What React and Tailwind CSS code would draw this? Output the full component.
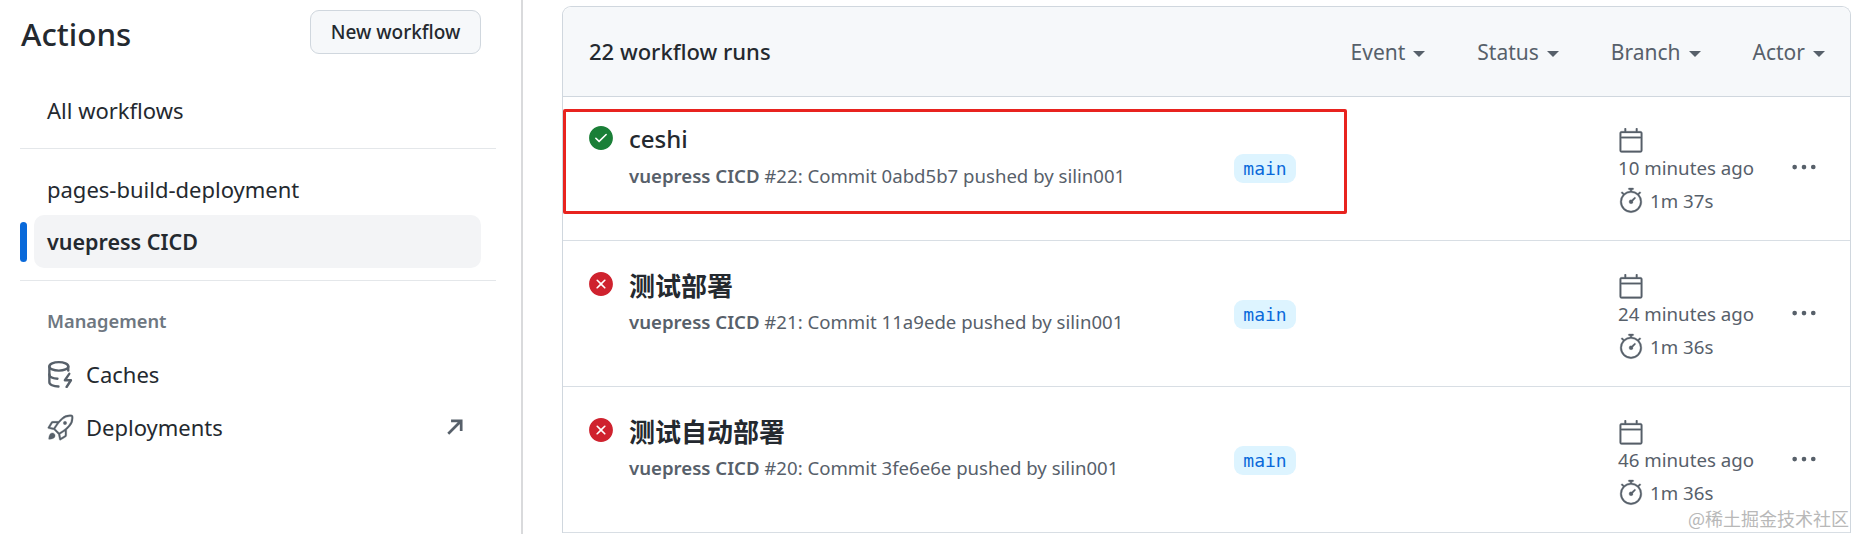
import { GoCheckCircleFill, GoXCircleFill, GoCalendar, GoStopwatch, GoKebabHorizontal, GoRocket } from 'react-icons/go'

const runs = [
  { title: 'ceshi', ok: true, sub: '#22: Commit 0abd5b7 pushed by silin001', when: '10 minutes ago', took: '1m 37s', box: 'h-[144px] pt-[28px]', head: 'text-[24px] leading-[34px] font-medium' },
  { title: '测试部署', ok: false, sub: '#21: Commit 11a9ede pushed by silin001', when: '24 minutes ago', took: '1m 36s', box: 'h-[146px] pt-[30px]', head: 'text-[26px] leading-[36px] font-bold' },
  { title: '测试自动部署', ok: false, sub: '#20: Commit 3fe6e6e pushed by silin001', when: '46 minutes ago', took: '1m 36s', box: 'h-[146px] pt-[30px]', head: 'text-[26px] leading-[36px] font-bold' },
]

const filters = ['Event', 'Status', 'Branch', 'Actor']

// react-icons has no octicon "cache", so this one is drawn by hand
function CacheIcon() {
  return (
    <svg viewBox="0 0 16 16" className="h-[27px] w-[27px] text-[#57606a]" fill="none" stroke="currentColor" strokeWidth="1.4" strokeLinecap="round">
      <ellipse cx="7" cy="3.2" rx="5.6" ry="2.5" />
      <path d="M1.4 3.2v9.4c0 1.4 2.4 2.5 5.4 2.5" />
      <path d="M1.4 8c0 1.3 2 2.3 4.8 2.5" />
      <path d="M12.6 3.2v2.4" />
      <path d="M13.2 7.6 10.6 11.4h3.6L11.6 15.4" strokeLinejoin="round" />
    </svg>
  )
}

function Sidebar() {
  return (
    <aside className="w-[523px] shrink-0 border-r-2 border-[#d9dadc] pl-[20px] text-[#24292f]">
      <div className="w-[476px]">
        <div className="flex items-start justify-between pt-[10px] pr-[15px]">
          <h1 className="ml-[1px] h-[44px] text-[31.3px] font-medium leading-[48px]">Actions</h1>
          <button className="h-[44px] w-[171px] rounded-[9px] border border-[#d0d7de] bg-[#f6f8fa] text-[19px] font-medium leading-[42px]">
            New workflow
          </button>
        </div>
        <div className="mt-[30px] flex h-[53px] items-center pl-[27px] text-[22px]">All workflows</div>
        <div className="mt-[11px] border-t border-[#e4e7ea]" />
        <div className="mt-[16px] flex h-[50px] items-center pb-[1px] pl-[27px] text-[22px]">pages-build-deployment</div>
        <div className="flex h-[53px] items-center">
          <span className="h-[40px] w-[7px] rounded-[4px] bg-[#0969da]" />
          <div className="ml-[7px] flex h-[53px] w-[447px] items-center rounded-[10px] bg-[#f3f4f6] pl-[13px] pt-[1px] text-[21.5px] font-semibold">
            vuepress CICD
          </div>
        </div>
        <div className="mt-[12px] border-t border-[#e4e7ea]" />
        <div className="mt-[28px] h-[24px] pl-[27px] text-[18.3px] font-semibold leading-[24px] text-[#6e7781]">Management</div>
        <div className="mt-[15px] flex h-[53px] items-center pl-[27px] text-[22px]">
          <CacheIcon />
          <span className="ml-[12px]">Caches</span>
        </div>
        <div className="flex h-[52px] items-center pl-[27px] text-[22px]">
          <GoRocket className="h-[27px] w-[27px] text-[#57606a]" stroke="currentColor" strokeWidth={0.3} />
          <span className="ml-[12px]">Deployments</span>
          <svg viewBox="0 0 16 16" className="ml-auto mr-[32px] h-[18px] w-[18px] text-[#57606a]" fill="none" stroke="currentColor" strokeWidth="2.4">
            <path d="M2 14 13.5 2.5M4.5 2.5h9v9" />
          </svg>
        </div>
      </div>
    </aside>
  )
}

function Run({ run }) {
  return (
    <div className={`flex items-start border-b border-[#d8dee4] pl-[25px] ${run.box}`}>
      {run.ok ? (
        <GoCheckCircleFill className="h-[26px] w-[26px] shrink-0 text-[#1a7f37]" />
      ) : (
        <GoXCircleFill className="h-[26px] w-[26px] shrink-0 text-[#cf222e]" />
      )}
      <div className="-mt-[3px] ml-[15px] w-[605px] shrink-0">
        <div className={`h-[34px] text-[#24292f] ${run.head}`}>{run.title}</div>
        <div className="mt-[7px] h-[26px] text-[18.6px] leading-[26px] text-[#57606a]">
          <span className="font-semibold">vuepress CICD</span> {run.sub}
        </div>
      </div>
      <div className="mt-[29px] h-[29px] w-[62px] shrink-0 rounded-[9px] bg-[#ddf4ff] text-center font-['DejaVu_Sans_Mono',monospace] text-[18px] leading-[29px] text-[#0969da]">
        main
      </div>
      <div className="mt-[3px] ml-[322px] w-[171px] shrink-0 text-[18.7px] text-[#57606a]">
        <GoCalendar className="h-[26px] w-[26px]" stroke="currentColor" strokeWidth={0.3} />
        <div className="h-[28px] leading-[28px]">{run.when}</div>
        <div className="mt-[6px] flex h-[26px] items-center">
          <GoStopwatch className="h-[28px] w-[26px]" stroke="currentColor" strokeWidth={0.3} />
          <span className="ml-[6px]">{run.took}</span>
        </div>
      </div>
      <GoKebabHorizontal className="mt-[28px] h-[28px] w-[30px] shrink-0 text-[#57606a]" />
    </div>
  )
}

export default function App() {
  return (
    <div className="relative flex h-[534px] w-[1854px] overflow-hidden bg-white font-['Noto_Sans','Noto_Sans_CJK_SC',sans-serif]">
      <Sidebar />
      <main className="ml-[39px] mt-[6px] w-[1289px]">
        <div className="rounded-t-[9px] border border-b-0 border-[#d0d7de]">
          <div className="flex h-[90px] items-center justify-between rounded-t-[9px] border-b border-[#d0d7de] bg-[#f6f8fa] pl-[26px] pr-[25px]">
            <span className="text-[22px] font-medium text-[#24292f]">22 workflow runs</span>
            <div className="mt-[2px] flex gap-[52px]">
              {filters.map((name) => (
                <div key={name} className="flex items-center text-[21px] text-[#57606a]">
                  {name}
                  <span className="ml-[8px] mt-[3px] border-x-[6px] border-t-[6px] border-x-transparent border-t-[#57606a]" />
                </div>
              ))}
            </div>
          </div>
          {runs.map((run) => (
            <Run key={run.title} run={run} />
          ))}
        </div>
      </main>
      <div className="absolute left-[563px] top-[109px] h-[105px] w-[784px] rounded-[2px] border-[3px] border-[#e8231f]" />
      <div className="absolute left-[1688px] top-[506px] font-['Noto_Sans_CJK_SC',serif] text-[18px] leading-[24px] text-[#b8b8b8]">
        @稀土掘金技术社区
      </div>
    </div>
  )
}
